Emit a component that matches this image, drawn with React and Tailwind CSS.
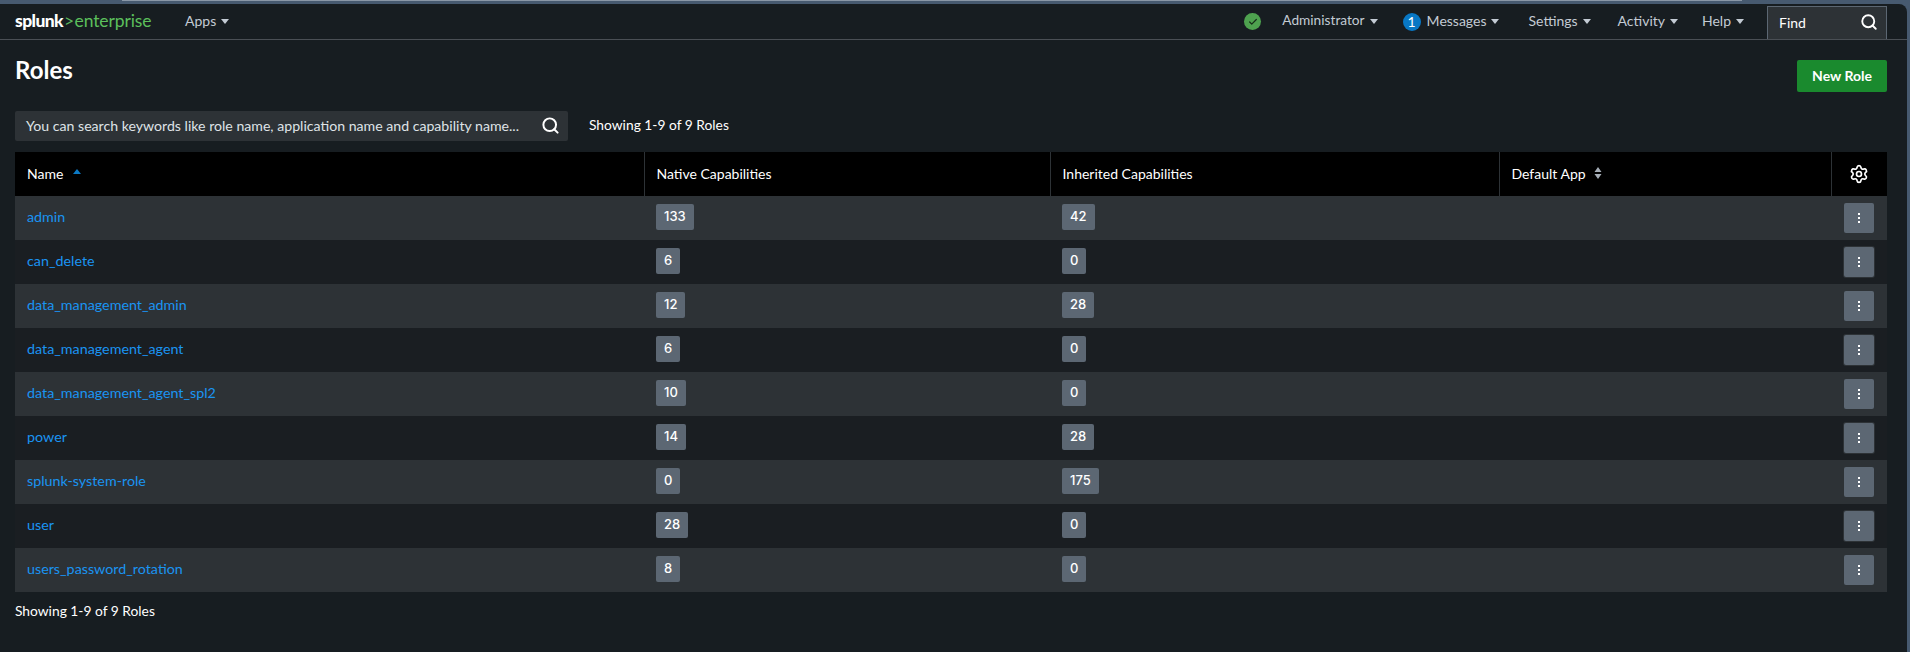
import React from "react";
import { Search, Settings, Check } from "lucide-react";

const roles = [
  ["admin", 133, 42],
  ["can_delete", 6, 0],
  ["data_management_admin", 12, 28],
  ["data_management_agent", 6, 0],
  ["data_management_agent_spl2", 10, 0],
  ["power", 14, 28],
  ["splunk-system-role", 0, 175],
  ["user", 28, 0],
  ["users_password_rotation", 8, 0],
];

const Caret = () => (
  <svg width="8" height="5" viewBox="0 0 8 5" className="ml-[5px] mt-[2px]">
    <path d="M0 0h8L4 5z" fill="#c3cbd4" />
  </svg>
);

const NavItem = ({ label, className = "" }) => (
  <div className={`flex items-center text-[#c3cbd4] ${className}`}>
    {label}
    <Caret />
  </div>
);

const Badge = ({ value }) => (
  <span className="inline-flex h-[26px] min-w-6 items-center rounded-[2px] bg-[#5c6773] px-2 font-['Inter',sans-serif] text-[13px] font-medium text-white">
    {value}
  </span>
);

export default function App() {
  return (
    <div className="h-[652px] w-full overflow-hidden bg-[#475a70] pr-[3px] font-['Lato',sans-serif] text-[14px]">
      <div className="ml-[122px] mr-[165px] h-px bg-[#8a97a6]" />
      <div className="mt-[3px] h-full overflow-hidden rounded-tr-[8px] bg-[#171d21]">
        <header className="box-content flex h-[35px] items-center border-b border-[#4a4f55] pl-[15px] pr-[20px]">
          <div className="flex w-[170px] items-baseline pb-[2px] text-[17.5px] leading-none tracking-[-0.6px]">
            <span className="font-black text-white">splunk</span>
            <span className="mx-[1px] text-[#5cb85c]">&gt;</span>
            <span className="tracking-[-0.1px] text-[#5cc05c]">enterprise</span>
          </div>
          <NavItem label="Apps" className="pb-[2px]" />
          <div className="flex-1" />
          <div className="flex h-[17px] w-[17px] items-center justify-center rounded-full bg-[#4ea24f]">
            <Check size={10} strokeWidth={3} className="text-[#17301a]" />
          </div>
          <NavItem label="Administrator" className="ml-[21px] pb-[2px] text-[13.7px]" />
          <div className="ml-[25px] flex h-[18px] w-[18px] items-center justify-center rounded-full bg-[#0877c4] text-white">
            1
          </div>
          <NavItem label="Messages" className="ml-[6px] pb-[2px]" />
          <NavItem label="Settings" className="ml-[29px] pb-[2px]" />
          <NavItem label="Activity" className="ml-[27px] pb-[2px]" />
          <NavItem label="Help" className="ml-[24px] pb-[2px]" />
          <div className="ml-[23px] mt-[2px] flex h-[33px] w-[120px] items-center justify-between border border-b-0 border-[#5c6773] bg-[#2d3236] pb-[2px] pl-[11px] pr-[8px] text-white">
            Find
            <Search size={18} strokeWidth={2.5} className="text-white" />
          </div>
        </header>

        <main className="px-[15px] pr-5">
          <div className="flex items-start justify-between">
            <h1 className="mt-[15px] text-[24px] font-bold leading-[30px] text-white">Roles</h1>
            <button className="mt-5 h-[32px] w-[90px] rounded-[2px] bg-[#1a8a2e] pb-[2px] text-[14px] font-bold text-white">
              New Role
            </button>
          </div>

          <div className="mt-[19px] flex items-center">
            <div className="flex h-[30px] w-[553px] items-center justify-between rounded-[2px] bg-[#2d3236] pb-px pl-[11px] pr-2 text-[14.14px] text-[#dfe3e7]">
              You can search keywords like role name, application name and capability name...
              <Search size={19} strokeWidth={2.5} className="text-white" />
            </div>
            <span className="ml-[21px] pb-[2px] text-[13.8px] text-white">Showing 1-9 of 9 Roles</span>
          </div>

          <table className="mt-[11px] w-[1872px] table-fixed border-collapse">
            <colgroup>
              <col className="w-[629px]" />
              <col className="w-[406px]" />
              <col className="w-[449px]" />
              <col className="w-[332px]" />
              <col className="w-[56px]" />
            </colgroup>
            <thead>
              <tr className="h-11 bg-black text-left text-white">
                <th className="px-3 pb-[2px] font-normal">
                  <span className="flex items-center">
                    Name
                    <svg width="8" height="5" viewBox="0 0 8 5" className="ml-[10px] -mt-[3px]">
                      <path d="M4 0l4 5H0z" fill="#0b79c4" />
                    </svg>
                  </span>
                </th>
                <th className="border-l border-[#2d3236] px-3 pb-[2px] font-normal">Native Capabilities</th>
                <th className="border-l border-[#2d3236] px-3 pb-[2px] font-normal">Inherited Capabilities</th>
                <th className="border-l border-[#2d3236] px-3 pb-[2px] font-normal">
                  <span className="flex items-center">
                    Default App
                    <svg width="8" height="12" viewBox="0 0 8 12" className="ml-[8px]">
                      <path d="M4 0l3.5 5h-7zM4 12L.5 7h7z" fill="#a5adb6" />
                    </svg>
                  </span>
                </th>
                <th className="border-l border-[#2d3236] font-normal">
                  <Settings size={20} strokeWidth={2} className="mx-auto text-white" />
                </th>
              </tr>
            </thead>
            <tbody>
              {roles.map(([name, native, inherited], i) => (
                <tr key={name} className={`h-11 ${i % 2 === 0 ? "bg-[#2d3236]" : "bg-[#1a1e22]"}`}>
                  <td className="px-3 pb-[2px] text-[14.3px] text-[#1a94f2]">{name}</td>
                  <td className="px-3 pb-[2px]"><Badge value={native} /></td>
                  <td className="px-3 pb-[2px]"><Badge value={inherited} /></td>
                  <td />
                  <td>
                    <div className={`mx-auto flex h-[30px] w-[30px] flex-col items-center justify-center gap-[2px] rounded-[2px] bg-[#5c6773] ${i % 2 === 1 ? "shadow-[0_0_0_1px_#2d3236]" : ""}`}>
                      <span className="h-[2px] w-[2px] bg-white" />
                      <span className="h-[2px] w-[2px] bg-white" />
                      <span className="h-[2px] w-[2px] bg-white" />
                    </div>
                  </td>
                </tr>
              ))}
            </tbody>
          </table>

          <p className="mt-[9px] text-[13.8px] text-white">Showing 1-9 of 9 Roles</p>
        </main>
      </div>
    </div>
  );
}
